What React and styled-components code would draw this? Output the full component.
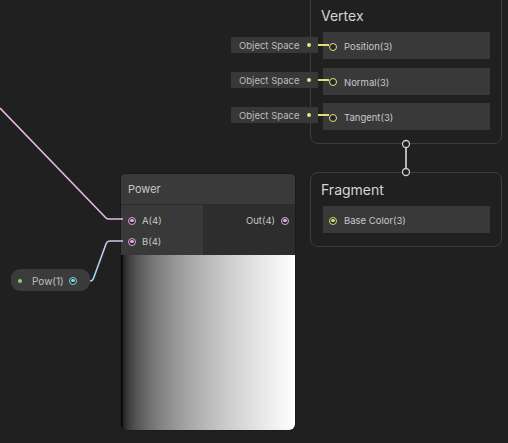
import { styled, createGlobalStyle } from 'styled-components'

const GlobalStyle = createGlobalStyle`
  html, body {
    margin: 0;
    padding: 0;
    background: #202020;
  }
  * { box-sizing: border-box; }
`

const vertexPorts = ['Position(3)', 'Normal(3)', 'Tangent(3)']

// srgb of a linear black->white ramp, the way the preview shows it
const previewStops = [0, 0.02, 0.05, 0.1, 0.2, 0.3, 0.4, 0.5, 0.6, 0.7, 0.8, 0.9, 1]
  .map(t => {
    const v = Math.round(Math.pow(t, 1 / 2.2) * 255)
    return `rgb(${v},${v},${v}) ${t * 100}%`
  })
  .join(', ')

function App() {
  return (
    <>
      <GlobalStyle />
      <Canvas>
        <InlineInputs>
          {vertexPorts.map(p => (
            <InlineValue key={p}>
              <span>Object Space</span>
              <Dot $color="#e6e67a" />
            </InlineValue>
          ))}
        </InlineInputs>

        <Context $x={310} $y={-12} $h={156}>
          <ContextTitle $pad={18}>Vertex</ContextTitle>
          <BlockList>
            {vertexPorts.map(p => (
              <Block key={p}>
                <Port $color="#e4e48a" />
                {p}
              </Block>
            ))}
          </BlockList>
        </Context>

        <Context $x={310} $y={172} $h={75}>
          <ContextTitle $pad={8}>Fragment</ContextTitle>
          <BlockList>
            <Block>
              <Port $color="#d8d870" $filled />
              Base Color(3)
            </Block>
          </BlockList>
        </Context>

        <PowerNode>
          <NodeHeader>Power</NodeHeader>
          <NodeBody>
            <Inputs>
              <Slot>
                <Port $color="#e2a6e2" $filled />
                A(4)
              </Slot>
              <Slot>
                <Port $color="#e2a6e2" $filled />
                B(4)
              </Slot>
            </Inputs>
            <Outputs>
              <Slot>
                Out(4)
                <Port $color="#e2a6e2" $filled />
              </Slot>
            </Outputs>
          </NodeBody>
          <Preview style={{ background: `linear-gradient(to right, ${previewStops})` }} />
        </PowerNode>

        <PropertyNode>
          <Dot $color="#8fd35a" />
          <PropertyName>Pow(1)</PropertyName>
          <Port $color="#8ad6e6" $filled />
        </PropertyNode>

        <Edges width="508" height="443" viewBox="0 0 508 443">
          <defs>
            <linearGradient id="powEdge" x1="0" y1="1" x2="0" y2="0">
              <stop offset="0" stopColor="#9ad6ee" />
              <stop offset="1" stopColor="#cfc2ee" />
            </linearGradient>
            <linearGradient id="outEdge" x1="0" y1="0" x2="1" y2="0">
              <stop offset="0" stopColor="#e6bcd6" />
              <stop offset="1" stopColor="#b8b478" />
            </linearGradient>
          </defs>
          <path d="M0 108 L106 218 Q107 219 109 219 L123 219" fill="none" stroke="#e8b6e8" strokeWidth="1.6" />
          <path d="M90 281 Q93 281 94 277 L106 244 Q107 241 110 241 L123 241" fill="none" stroke="url(#powEdge)" strokeWidth="1.6" />
          <path d="M289 219.5 L329 219.5" fill="none" stroke="url(#outEdge)" strokeWidth="2" />
          {[45, 80, 115].map(y => (
            <path key={y} d={`M312 ${y} L329 ${y}`} stroke="#e0e070" strokeWidth="2" />
          ))}
          <path d="M406 147.5 L406 168.5" stroke="#b4b4b4" strokeWidth="2" />
          <circle cx="406" cy="144" r="3.5" fill="#202020" stroke="#cfcfcf" strokeWidth="1.3" />
          <circle cx="406" cy="172" r="3.5" fill="#202020" stroke="#cfcfcf" strokeWidth="1.3" />
        </Edges>
      </Canvas>
    </>
  )
}

const Canvas = styled.main`
  position: relative;
  width: 508px;
  height: 443px;
  overflow: hidden;
  background: #202020;
  font-family: Inter, "Noto Sans", sans-serif;
  font-size: 9.5px;
  color: #c4c4c4;
  white-space: nowrap;
`

const Edges = styled.svg`
  position: absolute;
  inset: 0;
  pointer-events: none;
`

const Port = styled.span`
  position: relative;
  flex: none;
  width: 8px;
  height: 8px;
  border-radius: 50%;
  border: 1.4px solid ${p => p.$color};
  background: #262626;
  &::after {
    content: '';
    display: ${p => (p.$filled ? 'block' : 'none')};
    position: absolute;
    inset: 1.2px;
    border-radius: 50%;
    background: ${p => p.$color};
  }
`

const Dot = styled.span`
  flex: none;
  width: 4px;
  height: 4px;
  border-radius: 50%;
  background: ${p => p.$color};
`

const Context = styled.section`
  position: absolute;
  left: ${p => p.$x}px;
  top: ${p => p.$y}px;
  width: 192px;
  height: ${p => p.$h}px;
  border: 1px solid #3d3d3d;
  border-radius: 8px;
  display: flex;
  flex-direction: column;
`

const ContextTitle = styled.h2`
  margin: 0;
  padding: ${p => p.$pad}px 0 0 10px;
  font-size: 14px;
  font-weight: 400;
  line-height: 18px;
  color: #d4d4d4;
`

const BlockList = styled.div`
  margin: 7px 11px 0 12px;
  display: flex;
  flex-direction: column;
  gap: 8.5px;
`

const Block = styled.div`
  height: 27px;
  background: #393939;
  display: flex;
  align-items: center;
  gap: 7px;
  padding: 2px 0 0 6px;
  color: #c8c8c8;
`

const InlineInputs = styled.div`
  position: absolute;
  left: 231px;
  top: 37px;
  display: flex;
  flex-direction: column;
  gap: 19px;
  z-index: 1;
`

const InlineValue = styled.div`
  width: 87px;
  height: 16px;
  background: #383838;
  display: flex;
  align-items: center;
  justify-content: space-between;
  padding: 0 7px 0 8px;
  color: #bdbdbd;
`

const PowerNode = styled.section`
  position: absolute;
  left: 121px;
  top: 174px;
  width: 174px;
  display: flex;
  flex-direction: column;
  border-radius: 4px 4px 6px 6px;
  overflow: hidden;
  box-shadow: 0 0 0 1px #1a1a1a;
`

const NodeHeader = styled.header`
  height: 31px;
  background: #3a3a3a;
  border-bottom: 1px solid #2c2c2c;
  display: flex;
  align-items: center;
  padding: 0 7px;
  font-size: 11px;
  color: #c8c8c8;
`

const NodeBody = styled.div`
  height: 50px;
  display: flex;
`

const Inputs = styled.div`
  width: 82px;
  background: #393939;
  padding: 5px 0 0 7px;
  display: flex;
  flex-direction: column;
`

const Outputs = styled.div`
  flex: 1;
  background: #2d2d2d;
  padding: 5px 6px 0 0;
  display: flex;
  flex-direction: column;
  align-items: flex-end;
`

const Slot = styled.div`
  height: 21px;
  display: flex;
  align-items: center;
  gap: 6px;
  color: #c6c6c6;
`

const Preview = styled.div`
  height: 175px;
`

const PropertyNode = styled.div`
  position: absolute;
  left: 11px;
  top: 269px;
  width: 79px;
  height: 22px;
  border-radius: 9px;
  background: #3b3b3b;
  display: flex;
  align-items: center;
  padding: 1px 0 0 7px;
  color: #c0c0c0;
`

const PropertyName = styled.span`
  margin: 0 5px 0 10px;
  font-size: 10px;
`

export default App
